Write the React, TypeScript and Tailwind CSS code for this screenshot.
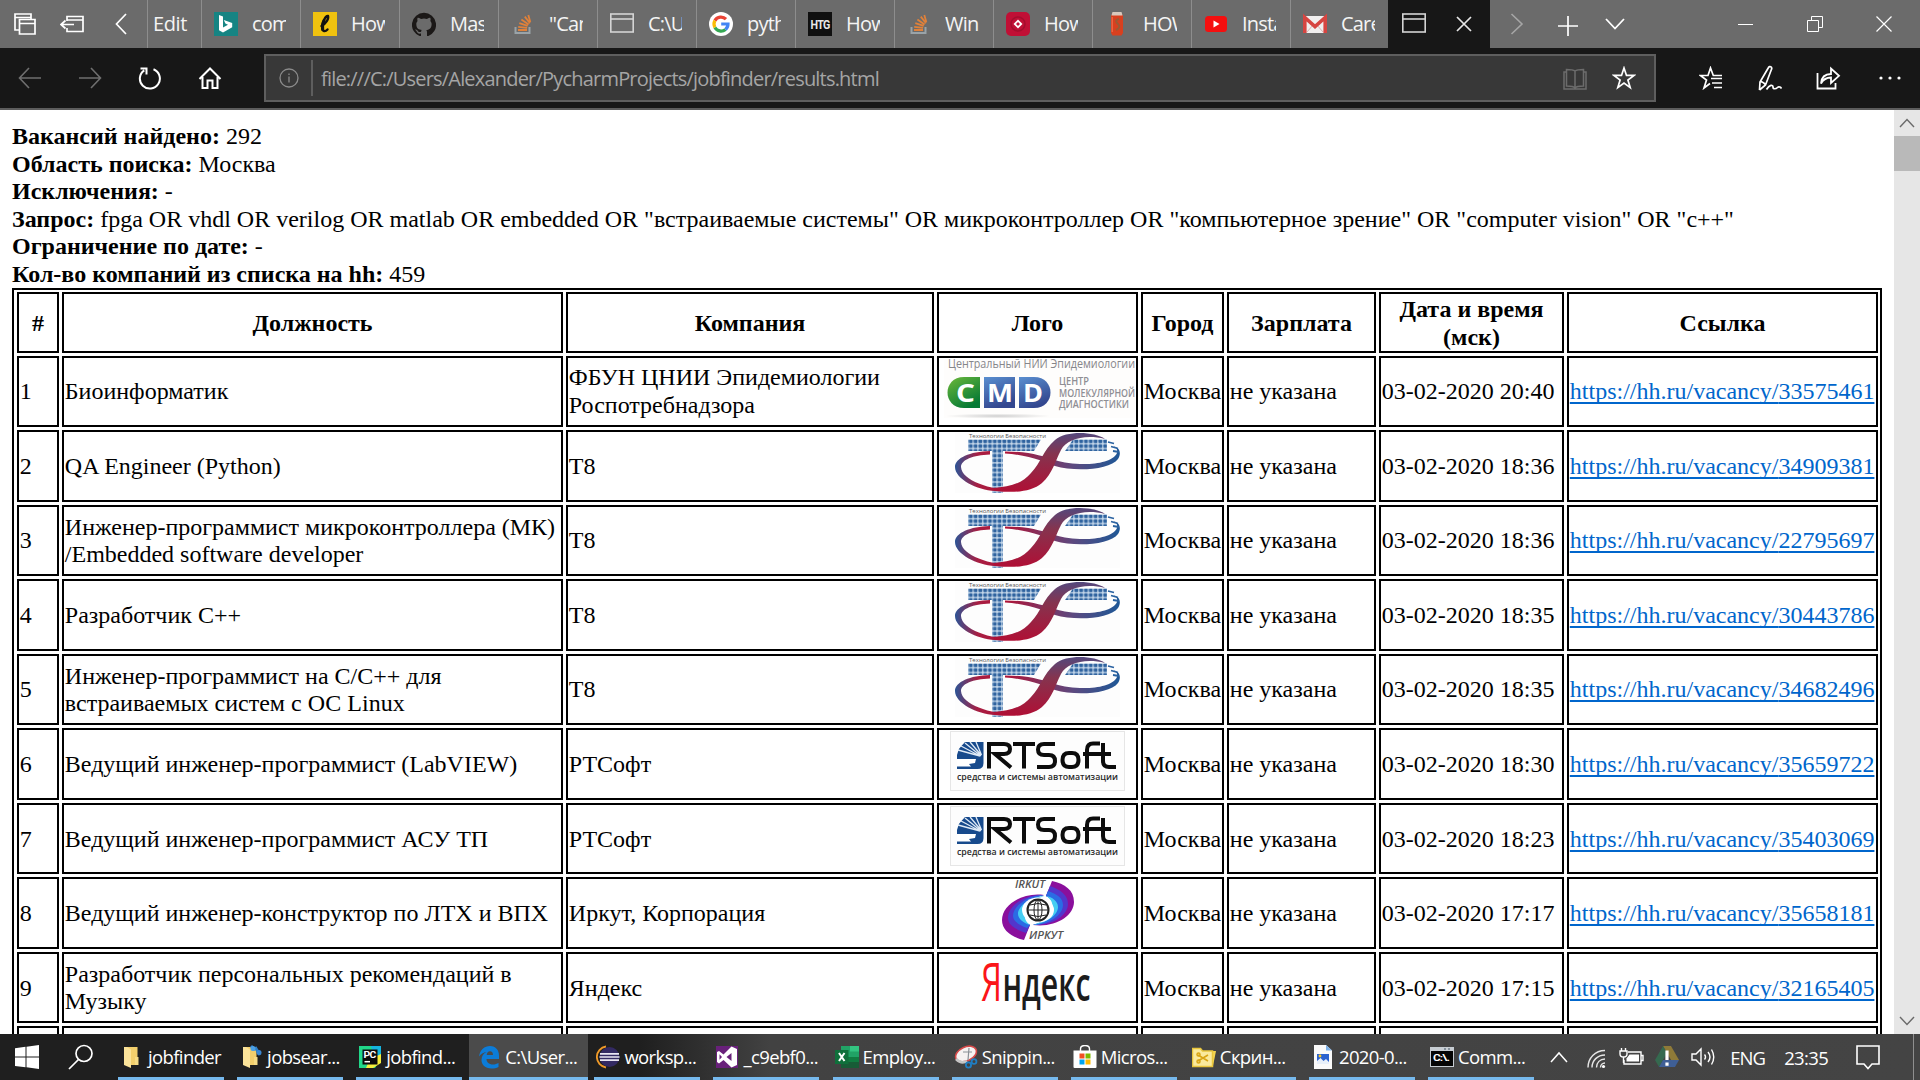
import React from 'react';

type IconProps = { children: React.ReactNode; w?: number; h?: number; stroke?: string; sw?: number; className?: string };

function Svg({ children, w = 24, h = 24, stroke = 'none', sw = 1.5, className = '' }: IconProps) {
  return (
    <svg width={w} height={h} viewBox={`0 0 ${w} ${h}`} fill="none" stroke={stroke} strokeWidth={sw} className={`shrink-0 ${className}`}>
      {children}
    </svg>
  );
}

/* ---------- Favicons ---------- */

const PageIcon = () => (
  <Svg stroke="#d4d4d4" sw={1.6}>
    <rect x="0.8" y="2" width="22.4" height="18" />
    <path d="M1 7h22" />
  </Svg>
);

const BingIcon = () => (
  <Svg>
    <rect width="24" height="24" fill="#168483" />
    <path d="M5 3l4 1.6v11l5-2.8-2.6-1.3L9.800 8l8.400 3v4.300L9 20.500l-4-2.300z" fill="#fff" />
  </Svg>
);

const LetterLIcon = () => (
  <Svg>
    <rect width="24" height="24" fill="#f0c20f" />
    <path d="M8.500 14c4-2 7.500-7 6.500-10-2.500-.5-5.500 6-5.800 11-.2 4 2.500 5.500 5.300 2.500" stroke="#111" strokeWidth="2.400" strokeLinecap="round" />
    <path d="M11 8.500c-1.500 3-2 6-1.300 9" stroke="#111" strokeWidth="3" strokeLinecap="round" />
  </Svg>
);

const GithubIcon = () => (
  <Svg>
    <path
      transform="translate(0 .5)"
      fill="#1b1817"
      d="M12 .3a12 12 0 0 0-3.800 23.400c.6.100.8-.3.800-.6v-2c-3.300.7-4-1.600-4-1.600-.6-1.400-1.400-1.800-1.400-1.800-1-.7.1-.7.1-.7 1.200 0 1.900 1.200 1.900 1.200 1 1.800 2.800 1.300 3.500 1 0-.8.4-1.300.7-1.600-2.700-.3-5.500-1.300-5.500-6 0-1.200.5-2.300 1.300-3.100-.2-.4-.6-1.600 0-3.200 0 0 1-.3 3.400 1.200a11.500 11.500 0 0 1 6 0c2.300-1.500 3.300-1.200 3.300-1.200.6 1.600.2 2.800 0 3.200.9.800 1.300 1.900 1.300 3.200 0 4.600-2.800 5.600-5.500 5.900.5.4.9 1 .9 2.200v3.300c0 .3.1.7.8.6A12 12 0 0 0 12 .3"
    />
  </Svg>
);

const StackIcon = () => (
  <Svg>
    <path d="M4.500 15v6h14v-6" stroke="#9aa3a8" strokeWidth="2" />
    <path d="M7 18h9M7.200 14.800l8.900 1M8.300 11.200l8.400 2.700M10.400 7.600l7.200 4.800M13.800 4.600l5.200 6.600M17.300 3l2 7" stroke="#e0813a" strokeWidth="1.800" />
  </Svg>
);

const GoogleIcon = () => (
  <Svg>
    <circle cx="12" cy="12" r="12" fill="#fff" />
    <g strokeWidth="3.200">
      <path d="M17 7.200A7 7 0 0 0 5.900 8.600" stroke="#ea4335" />
      <path d="M5.900 8.600a7 7 0 0 0 0 6.800" stroke="#fbbc05" />
      <path d="M5.900 15.400a7 7 0 0 0 10.600 2" stroke="#34a853" />
      <path d="M16.500 17.400A7 7 0 0 0 19 12h-6.800" stroke="#4285f4" />
    </g>
  </Svg>
);

const HtgIcon = () => (
  <Svg>
    <rect width="24" height="24" fill="#101010" />
    <text x="2.500" y="16.500" fontSize="12" fontWeight="700" fill="#e8e8e8" textLength="19" lengthAdjust="spacingAndGlyphs" fontFamily="Roboto, sans-serif">HTG</text>
  </Svg>
);

const RedIcon = () => (
  <Svg>
    <rect width="24" height="24" rx="5" fill="#c00f35" />
    <circle cx="12" cy="12" r="7" stroke="#a30d2d" strokeWidth="1.500" />
    <path d="M12 7.500l4.500 4.500-4.500 4.500L7.500 12z" fill="#fff" />
    <path d="M12 10l2 2-2 2-2-2z" fill="#c00f35" />
  </Svg>
);

const CanIcon = () => (
  <Svg>
    <path d="M7.500 1h9l1.500 3v17l-1.500 2.500h-9L6 21V4z" fill="#d8401f" />
    <path d="M7.500 0h9l1 3.500H6.500z" fill="#d9c9bd" />
    <path d="M14 7c-4 1-3 3-1 5s2 4-2 6" stroke="#9a5a34" strokeWidth="2" />
    <path d="M7.200 5v15" stroke="#f06c4a" strokeWidth="1.200" />
  </Svg>
);

const YoutubeIcon = () => (
  <Svg>
    <rect x="1" y="4" width="22" height="16" rx="3.500" fill="#f50f0f" />
    <path d="M9.500 8.500v7l6-3.500z" fill="#fff" />
  </Svg>
);

const GmailIcon = () => (
  <Svg>
    <rect y="4" width="24" height="17" rx="1" fill="#f1efef" />
    <path d="M4 20l6-7m10 7l-6-7" stroke="#d9b3b0" strokeWidth="1" />
    <path d="M1.800 21V5.500L12 14.500 22.200 5.500V21" stroke="#d64541" strokeWidth="3.600" />
  </Svg>
);

const tabs: { icon: React.ReactNode; label: string }[] = [
  { icon: <BingIcon />, label: 'comp' },
  { icon: <LetterLIcon />, label: 'How t' },
  { icon: <GithubIcon />, label: 'Mast' },
  { icon: <StackIcon />, label: '"Can' },
  { icon: <PageIcon />, label: 'C:\\Us' },
  { icon: <GoogleIcon />, label: 'pyth' },
  { icon: <HtgIcon />, label: 'How' },
  { icon: <StackIcon />, label: 'Win' },
  { icon: <RedIcon />, label: 'How' },
  { icon: <CanIcon />, label: 'HOW' },
  { icon: <YoutubeIcon />, label: 'Insta' },
  { icon: <GmailIcon />, label: 'Care' },
];

function TabBar() {
  return (
    <div className="flex h-12 bg-[#6b6b6b] text-[20px] tracking-[-0.8px] text-[#f4f4f4]">
      <div className="flex w-[147px] shrink-0 items-center pl-[14px]">
        <Svg w={22} h={24} stroke="#fff" sw={1.700}>
          <path d="M5 18H1V2h16v5M1 5.500h16" />
          <path d="M5.500 7.500h15.500v14.500H5.500zM5.500 11.500H21" />
        </Svg>
        <Svg w={24} h={24} stroke="#fff" sw={1.700} className="ml-6">
          <path d="M7 9V4.500h16v15H7V16M7 8h16M1 12.500h13M5.500 8.500l-4.500 4 4.500 4" />
        </Svg>
        <Svg w={12} h={22} stroke="#fff" sw={1.700} className="ml-[31px]">
          <path d="M11 1L1.500 11 11 21" />
        </Svg>
      </div>
      <div className="flex w-[54px] shrink-0 items-center border-l border-[#8d8d8d] pl-[5px] tracking-[-0.4px]">Edit</div>
      {tabs.map((t, i) => (
        <div key={i} className="flex w-[99px] shrink-0 items-center border-l border-[#8d8d8d] pl-3">
          {t.icon}
          <span className="ml-[14px] w-[34px] overflow-hidden whitespace-nowrap">{t.label}</span>
        </div>
      ))}
      <div className="-ml-px flex w-[102px] shrink-0 items-center bg-[#171717] pl-[14px]">
        <PageIcon />
        <Svg w={16} h={16} stroke="#e6e6e6" sw={1.700} className="ml-[30px]">
          <path d="M1 1l14 14M15 1L1 15" />
        </Svg>
      </div>
      <div className="flex flex-1 items-center pl-[20px]">
        <Svg w={14} h={22} stroke="#a6a6a6" sw={1.600}>
          <path d="M1.500 1L12 11 1.500 21" />
        </Svg>
        <Svg w={22} h={22} stroke="#fff" sw={1.700} className="ml-[33px] mt-[3px]">
          <path d="M11 1v20M1 11h20" />
        </Svg>
        <Svg w={20} h={12} stroke="#fff" sw={1.800} className="ml-[26px]">
          <path d="M1 1l9 9.500L19 1" />
        </Svg>
        <Svg w={15} h={15} stroke="#fff" sw={1} className="ml-auto">
          <path d="M0 7.500h15" />
        </Svg>
        <Svg w={16} h={16} stroke="#fff" sw={1} className="ml-[54px]">
          <path d="M.5 4.500h11v11H.5zM4.500 4.500v-4h11v11h-4" />
        </Svg>
        <Svg w={16} h={16} stroke="#fff" sw={1.200} className="ml-[53px] mr-[28px]">
          <path d="M.5 .5l15 15M15.500 .5l-15 15" />
        </Svg>
      </div>
    </div>
  );
}

function Toolbar() {
  return (
    <div className="flex h-[62px] items-center border-b-2 border-[#5d5d5d] bg-[#171717] pl-[18px] text-[20px]">
      <Svg w={24} h={22} stroke="#6f6f6f" sw={1.600}>
        <path d="M23 11H1.500M11 1L1.500 11 11 21" />
      </Svg>
      <Svg w={24} h={22} stroke="#6f6f6f" sw={1.600} className="ml-9">
        <path d="M1 11h21.500M13 1l9.500 10L13 21" />
      </Svg>
      <Svg w={24} h={24} stroke="#fff" sw={2} className="ml-9">
        <path d="M15.500 3.300A10 10 0 1 1 6.300 4.300M2.500 2.500h6v6" />
      </Svg>
      <Svg w={24} h={24} stroke="#fff" sw={2} className="ml-9">
        <path d="M1.500 13L12 2.500 22.500 13M4.500 11v11h5v-7.500h5V22h5V11" />
      </Svg>
      <div className="ml-[42px] flex h-12 w-[1392px] items-center border-2 border-[#5e5e5e] bg-[#383838] text-[#a5a5a5]">
        <Svg w={20} h={20} stroke="#8b8b8b" sw={1.300} className="ml-[13px]">
          <circle cx="10" cy="10" r="9" />
          <path d="M10 8.500v6M10 5.500v1.600" />
        </Svg>
        <div className="ml-3 h-9 w-0.5 bg-[#5e5e5e]" />
        <span className="ml-2 mt-[2px] whitespace-nowrap tracking-[-0.8px]">file:///C:/Users/Alexander/PycharmProjects/jobfinder/results.html</span>
        <Svg w={24} h={22} stroke="#6c6c6c" sw={1.500} className="ml-auto mt-[2px]">
          <path d="M12 3v17M12 3C10 1.500 6 1.500 3.500 1.500V18c3 0 7 0 8.500 2 1.500-2 5.500-2 8.500-2V1.500C18 1.500 14 1.500 12 3zM3 4H1v17h22V4h-2" />
        </Svg>
        <Svg w={24} h={24} stroke="#fff" sw={1.700} className="ml-[25px] mr-[18px]">
          <path d="M12 2l2.500 7.400H22l-6.100 4.600 2.300 7.600-6.200-4.600-6.200 4.600 2.300-7.600L2 9.400h7.500z" />
        </Svg>
      </div>
      <Svg w={24} h={24} stroke="#fff" sw={1.700} className="ml-[43px]">
        <path d="M12 12.500h11M13 17h10M15 21.500h8M23 9.500h-8.700L11.500 2 9 9.500H1.500l6 4.600L5 22l6-4.500" />
      </Svg>
      <Svg w={24} h={26} stroke="#fff" sw={1.700} className="ml-[35px]">
        <path d="M1.500 25l.5-8L10.500 2.500c1-2 4-.5 3 1.800L7.500 20l-6 5M2.200 17c.5-1 4 .5 5.300 3M8.500 24.500c3-5 6.500-5 6.500-2.500s3 2 4.500.5 3.500 0 4 1" />
      </Svg>
      <Svg w={25} h={24} stroke="#fff" sw={1.800} className="ml-[34px]">
        <path d="M1.500 7v15.500h18V17M5 17.500c.5-6.500 4-9.500 10-9.500V2.500l8 7.300-8 7.200v-5.500c-4 0-7.500 1.500-10 6z" />
      </Svg>
      <Svg w={24} h={6} className="ml-[37px]">
        <g fill="#fff">
          <circle cx="3" cy="3" r="1.600" />
          <circle cx="12" cy="3" r="1.600" />
          <circle cx="21" cy="3" r="1.600" />
        </g>
      </Svg>
    </div>
  );
}

/* ---------- Company logos ---------- */

const SANS = 'Open Sans, Noto Sans, sans-serif';

const CmdLogo = () => (
  <svg width="195" height="66" viewBox="0 0 195 66" className="shrink-0">
    <defs>
      <linearGradient id="cg" x1="0" y1="0" x2="0.600" y2="1">
        <stop offset="0" stopColor="#6cb83a" />
        <stop offset="1" stopColor="#067a35" />
      </linearGradient>
      <linearGradient id="cb" x1="0" y1="0" x2="0.400" y2="1">
        <stop offset="0" stopColor="#5a8fd0" />
        <stop offset="1" stopColor="#33478f" />
      </linearGradient>
      <radialGradient id="cs">
        <stop offset="0" stopColor="#cfcfcf" />
        <stop offset="1" stopColor="#fdfcfb" />
      </radialGradient>
    </defs>
    <rect x="4" y="0" width="191" height="59" fill="#fefdfc" />
    <text x="8" y="9" fontSize="12" fontWeight="500" fill="#86868a" fontFamily={SANS} textLength="187" lengthAdjust="spacingAndGlyphs">Центральный НИИ Эпидемиологии</text>
    <path d="M40 18v31H24c-22 0-22-31 0-31z" fill="url(#cg)" />
    <rect x="44" y="18" width="31" height="31" fill="url(#cb)" />
    <path d="M79 18h15c22 0 22 31 0 31H79z" fill="url(#cb)" />
    <ellipse cx="58" cy="57" rx="52" ry="2.500" fill="url(#cs)" />
    <g fontFamily={SANS} fontSize="24.500" fontWeight="700" fill="#fff">
      <text x="16" y="42.500" textLength="19" lengthAdjust="spacingAndGlyphs">C</text>
      <text x="47" y="42.500" textLength="26" lengthAdjust="spacingAndGlyphs">M</text>
      <text x="83" y="42.500" textLength="20" lengthAdjust="spacingAndGlyphs">D</text>
    </g>
    <g fontFamily={SANS} fontSize="10" fontWeight="600" fill="#8e8e94">
      <text x="119" y="26" textLength="30" lengthAdjust="spacingAndGlyphs">ЦЕНТР</text>
      <text x="119" y="37.500" textLength="76" lengthAdjust="spacingAndGlyphs">МОЛЕКУЛЯРНОЙ</text>
      <text x="119" y="49" textLength="70" lengthAdjust="spacingAndGlyphs">ДИАГНОСТИКИ</text>
    </g>
  </svg>
);

const T8Logo = () => (
  <svg width="165" height="60" viewBox="0 0 165 60" className="shrink-0">
    <defs>
      <pattern id="td" width="4.800" height="4.800" patternUnits="userSpaceOnUse" x="13.500" y="6">
        <rect width="4.800" height="4.800" fill="#c3d6e9" />
        <rect x="0.400" y="0.400" width="3.700" height="3.700" rx="1" fill="#2f639f" />
      </pattern>
      <linearGradient id="tr" x1="0" y1="0" x2="0" y2="1">
        <stop offset="0" stopColor="#54487c" />
        <stop offset="0.350" stopColor="#85344f" />
        <stop offset="1" stopColor="#b00f35" />
      </linearGradient>
      <linearGradient id="tl" x1="0" y1="0" x2="1" y2="0">
        <stop offset="0" stopColor="#2d5596" />
        <stop offset="0.350" stopColor="#a81e42" />
        <stop offset="1" stopColor="#b00f35" />
      </linearGradient>
      <linearGradient id="tq" x1="0" y1="0" x2="1" y2="0">
        <stop offset="0" stopColor="#b01437" />
        <stop offset="0.600" stopColor="#5b4a80" />
        <stop offset="1" stopColor="#1d5796" />
      </linearGradient>
    </defs>
    <rect width="165" height="60" fill="#fdfdfd" />
    <text x="14" y="4.500" fontSize="5.500" fill="#555" fontFamily={SANS} textLength="77" lengthAdjust="spacingAndGlyphs">Технологии Безопасности</text>
    <path d="M13 6.500h73l-7 11.500H48v42H37V18H13z" fill="url(#td)" />
    <path d="M118 6.500h34v11.500h-42z" fill="url(#td)" />
    <path d="M35 18C15 18.500 0 25 0 34c0 12 22 23 40 24h25c-30-1-58-10-59-24C6 27 18 22 35 21.500z" fill="url(#tl)" />
    <path d="M50 18.500c25 0 38 5 50 8.500 20 6.500 56 6 62-7 1-5-2-6-4-7 8 2 8 8 5 13-8 11-43 13-63 7-10-3.500-25-11-50-12.500z" fill="url(#tq)" />
    <path d="M150 6C140-1 112-3 100 7 88 17 86 30 76 40 68 50 55 54 38 55l2 3c20 2 36 1 47-8 11-10 13-22 19-33C112 6 130 1 150 6z" fill="url(#tr)" />
    <path d="M153 9l6 1.500m-3 3l7 2m-5 2.500l6 1" stroke="#2a62a0" strokeWidth="1.800" />
  </svg>
);

const RtLogo = () => (
  <svg width="175" height="60" viewBox="0 0 175 60" className="shrink-0">
    <rect x="0.500" y="0.500" width="174" height="59" fill="#fdfdfd" stroke="#e6e6e6" />
    <path d="M11 11h22.500v21q0 6-6 6H7V24z" fill="#174a8c" />
    <path d="M7 11h8L7 20z" fill="#fdfdfd" />
    <path d="M8 19l22 6M11 15l19 10M15 12l16 13M20 11l11 13M26 11l5.500 13" stroke="#dfeaf6" strokeWidth="1.300" />
    <path d="M7 28h19l-1 4-6 1 2 2.500H7z" fill="#fff" />
    <g stroke="#0c0c0c" strokeWidth="4" fill="none">
      <path d="M39 37.500V13h15q6 0 6 5t-6 5h-9l16 13.500" />
      <path d="M63 13h22M74 13v24.500" />
      <path d="M105 13H94q-6 0-6 5.500t6 5.500h5q6 0 6 6t-6 6H87" />
      <path d="M119 22h3q6.500 0 6.500 7t-6.500 7h-3q-6.500 0-6.500-7t6.500-7z" />
      <path d="M137 37.500V19q0-6.500 6-6.500h7M133 23h28M153 12v18q0 6 6 6h7" />
    </g>
    <text x="7" y="48.500" fontSize="9.500" fontWeight="600" fill="#2a2a2a" fontFamily={SANS} textLength="161" lengthAdjust="spacingAndGlyphs">средства и системы автоматизации</text>
  </svg>
);

const IrkutLogo = () => (
  <svg width="72" height="60" viewBox="0 0 72 60" className="shrink-0">
    <path d="M42 15C20 12 0 25 0 40c0 10 9 17 22 20l6-15C16 39 18 21 42 15z" fill="#8a0f9c" />
    <path d="M42 15C22 14 6 26 6 38c0 7 7 11 18 15l4-8C16 39 18 21 42 15z" fill="#5236cc" />
    <path d="M42 15C26 15 11 26 11 36c0 5 6 9 14 12l3-3C16 39 18 21 42 15z" fill="#2b6be4" />
    <path d="M42 16C28 17 16 26 16 34c0 5 6 9 12 11C18 38 22 23 42 16z" fill="#45cdf2" />
    <path d="M31 45c22 3 41-9 41-23C72 10 63 4 50 1l-6 15c13 5 11 23-13 29z" fill="#8a0f9c" />
    <path d="M31 45c20 1 35-10 35-21 0-9-7-14-18-18l-4 10c13 5 11 23-13 29z" fill="#5236cc" />
    <path d="M31 45c16 0 30-10 30-20 0-7-6-11-15-14l-2 5c13 5 11 23-13 29z" fill="#2b6be4" />
    <path d="M31 45c14-2 25-10 25-18 0-6-6-10-12-11 11 6 9 22-13 29z" fill="#45cdf2" />
    <ellipse cx="36" cy="30" rx="16" ry="12.500" fill="#fff" />
    <g stroke="#222" strokeWidth="1" fill="none">
      <circle cx="36" cy="30" r="10.500" strokeWidth="2" fill="#fff" />
      <ellipse cx="36" cy="30" rx="4" ry="10" />
      <path d="M26 30h20M28 25q8-3 16 0M28 35q8 3 16 0M36 20v20" />
    </g>
    <g fontFamily={SANS} fontSize="10" fontStyle="italic" fontWeight="600" fill="#555">
      <text x="13" y="8" textLength="30" lengthAdjust="spacingAndGlyphs">IRKUT</text>
      <text x="27" y="59" textLength="34" lengthAdjust="spacingAndGlyphs">ИРКУТ</text>
    </g>
  </svg>
);

const YandexLogo = () => (
  <svg width="120" height="60" viewBox="0 0 120 60" className="shrink-0">
    <g fontFamily={SANS}>
      <text x="3" y="45.500" fontSize="53" fontWeight="500" fill="#fb1519" textLength="21" lengthAdjust="spacingAndGlyphs">Я</text>
      <text x="24.500" y="45.500" fontSize="47" fontWeight="600" fill="#1c1c1c" textLength="88" lengthAdjust="spacingAndGlyphs">ндекс</text>
    </g>
  </svg>
);

/* ---------- Results table ---------- */

type Row = { title: string[]; company: string[]; logo: React.ReactNode; time: string; id: string };

const rows: Row[] = [
  { title: ['Биоинформатик'], company: ['ФБУН ЦНИИ Эпидемиологии', 'Роспотребнадзора'], logo: <CmdLogo />, time: '20:40', id: '33575461' },
  { title: ['QA Engineer (Python)'], company: ['Т8'], logo: <T8Logo />, time: '18:36', id: '34909381' },
  { title: ['Инженер-программист микроконтроллера (МК)', '/Embedded software developer'], company: ['Т8'], logo: <T8Logo />, time: '18:36', id: '22795697' },
  { title: ['Разработчик С++'], company: ['Т8'], logo: <T8Logo />, time: '18:35', id: '30443786' },
  { title: ['Инженер-программист на С/С++ для', 'встраиваемых систем с ОС Linux'], company: ['Т8'], logo: <T8Logo />, time: '18:35', id: '34682496' },
  { title: ['Ведущий инженер-программист (LabVIEW)'], company: ['РТСофт'], logo: <RtLogo />, time: '18:30', id: '35659722' },
  { title: ['Ведущий инженер-программист АСУ ТП'], company: ['РТСофт'], logo: <RtLogo />, time: '18:23', id: '35403069' },
  { title: ['Ведущий инженер-конструктор по ЛТХ и ВПХ'], company: ['Иркут, Корпорация'], logo: <IrkutLogo />, time: '17:17', id: '35658181' },
  { title: ['Разработчик персональных рекомендаций в', 'Музыку'], company: ['Яндекс'], logo: <YandexLogo />, time: '17:15', id: '32165405' },
];

const headers = ['#', 'Должность', 'Компания', 'Лого', 'Город', 'Зарплата', 'Дата и время (мск)', 'Ссылка'];

const summary: [string, string][] = [
  ['Вакансий найдено:', '292'],
  ['Область поиска:', 'Москва'],
  ['Исключения:', '-'],
  ['Запрос:', 'fpga OR vhdl OR verilog OR matlab OR embedded OR "встраиваемые системы" OR микроконтроллер OR "компьютерное зрение" OR "computer vision" OR "c++"'],
  ['Ограничение по дате:', '-'],
  ['Кол-во компаний из списка на hh:', '459'],
];

const Cell = ({ children }: { children?: React.ReactNode }) => (
  <div className="flex items-center whitespace-nowrap border-2 border-black pl-[0.8px] pt-[1.5px]">
    <div>{children}</div>
  </div>
);

const lines = (a: string[]) => a.map((s) => <div key={s}>{s}</div>);

function Page() {
  return (
    <div className="flex h-[924px] overflow-hidden bg-white font-['Liberation_Serif',serif] text-[24px] leading-[27.6px] text-black">
      <div className="w-[1894px] shrink-0 pl-3 pt-[13px]">
        <div className="-mb-px">
          {summary.map(([k, v]) => (
            <div key={k} className="whitespace-nowrap">
              <b>{k}</b> {v}
            </div>
          ))}
        </div>
        <div className="grid w-[1870px] auto-rows-[71.55px] grid-cols-[42px_501px_368px_201px_83px_149px_185px_311px] grid-rows-[61px] gap-[3px] border-2 border-black pl-[3px] pt-[2px]">
          {headers.map((h) => (
            <div key={h} className="flex items-center justify-center border-2 border-black px-3 pt-[3px] text-center font-bold">
              {h}
            </div>
          ))}
          {rows.map((r, i) => (
            <React.Fragment key={r.id}>
              <Cell>{i + 1}</Cell>
              <Cell>{lines(r.title)}</Cell>
              <Cell>{lines(r.company)}</Cell>
              <div className="flex items-start justify-center border-2 border-black pt-[1px]">{r.logo}</div>
              <Cell>Москва</Cell>
              <Cell>не указана</Cell>
              <Cell>03-02-2020 {r.time}</Cell>
              <Cell>
                <a className="text-[#0066cc] underline decoration-2 underline-offset-[3px] [text-decoration-skip-ink:none]">https://hh.ru/vacancy/{r.id}</a>
              </Cell>
            </React.Fragment>
          ))}
          {headers.map((h) => (
            <div key={h} className="border-2 border-black" />
          ))}
        </div>
      </div>
      <div className="flex flex-1 flex-col items-center bg-[#e6e6e6]">
        <div className="flex h-[26px] items-center">
          <Svg w={16} h={10} stroke="#6a6a6a" sw={1.400}>
            <path d="M1 9l7-7.500L15 9" />
          </Svg>
        </div>
        <div className="h-[35px] w-full bg-[#b9b9b9]" />
        <div className="mt-auto flex h-[26px] items-center">
          <Svg w={16} h={10} stroke="#6a6a6a" sw={1.400}>
            <path d="M1 1l7 7.500L15 1" />
          </Svg>
        </div>
      </div>
    </div>
  );
}

/* ---------- Taskbar ---------- */

const Folder = ({ children }: { children?: React.ReactNode }) => (
  <Svg>
    <path d="M5 2h12.500v18H9z" fill="#f3cf6c" />
    <path d="M4 2h3l4 2.500V23L4 20z" fill="#fbe39a" />
    <path d="M15 12h3.500v8H15z" fill="#f7dc85" />
    {children}
  </Svg>
);

const tasks: { icon: React.ReactNode; label: string; active?: boolean }[] = [
  { icon: <Folder />, label: 'jobfinder' },
  {
    icon: (
      <Folder>
        <path d="M12 1l4 4m0-3l5 8" stroke="#2f7fc8" strokeWidth="3" />
        <circle cx="14" cy="3.500" r="2.500" fill="#4ba0e4" />
        <circle cx="20" cy="7.500" r="2.500" fill="#3b87d3" />
      </Folder>
    ),
    label: 'jobsear...',
  },
  {
    icon: (
      <Svg>
        <path d="M1 1h22v12L17 23H1z" fill="#21d789" />
        <path d="M13 1h10v12l-6 4z" fill="#15b5e0" />
        <path d="M12 14l11-5v9l-8 5H8z" fill="#f5ee3c" />
        <rect x="4.500" y="4.500" width="15" height="15" fill="#0b0b0b" />
        <text x="5.500" y="12.800" fontSize="9" fontWeight="700" fill="#fff" textLength="12" lengthAdjust="spacingAndGlyphs" fontFamily="Roboto, sans-serif">PC</text>
        <path d="M6.500 16.700h5.500" stroke="#fff" />
      </Svg>
    ),
    label: 'jobfind...',
  },
  {
    icon: (
      <Svg>
        <path d="M2 11.500C3 5 7.500 1 13 1c6 0 9 4.500 9 9.500V14H9.500c0 4 3.500 5.500 6.500 5.500 2 0 4-.6 5.500-1.500v4c-2 1-4.500 1.500-7 1.500C8 23.500 4.500 19.500 4.500 15c0-4 2-6.500 5-8C6.500 7.500 3.800 9 2 11.500zM9.700 10H16c0-2.500-1-3.800-3-3.800S10 7.500 9.700 10z" fill="#0c7cd8" />
      </Svg>
    ),
    label: 'C:\\User...',
    active: true,
  },
  {
    icon: (
      <Svg>
        <path d="M10 1.500a10.600 10.600 0 0 0 0 21" stroke="#f09a28" strokeWidth="1.800" />
        <circle cx="13.500" cy="12" r="10" fill="#332a63" />
        <path d="M4 8.800h19M3.500 12h20M4 15.200h19" stroke="#e9e6f3" strokeWidth="1.700" />
      </Svg>
    ),
    label: 'worksp...',
  },
  {
    icon: (
      <Svg>
        <path d="M1 1h22v22H1z" fill="#68217a" />
        <path d="M16.500 1.500L22 4v16l-5.500 2.500L8.500 15 4 18.500 2 17V7l2-1 4.500 3.500zM4.500 9.200v5.600L7 12zm12-1.200l-5 4 5 4z" fill="#fff" fillRule="evenodd" />
      </Svg>
    ),
    label: '_c9ebf0...',
  },
  {
    icon: (
      <Svg>
        <path d="M6 1h18v22H6z" fill="#21a366" />
        <path d="M6 12h18v11H6z" fill="#107c41" />
        <path d="M15 1h9v5.500h-9z" fill="#33c481" />
        <path d="M6 17h18v6H6z" fill="#185c37" />
        <path d="M0 5h13.500v14H0z" fill="#0f703b" />
        <path d="M4 8l5.500 8M9.500 8L4 16" stroke="#fff" strokeWidth="2" />
      </Svg>
    ),
    label: 'Employ...',
  },
  {
    icon: (
      <Svg>
        <ellipse cx="12" cy="9" rx="11" ry="7" fill="#f5f2f2" stroke="#d64a4a" strokeWidth="1.600" transform="rotate(-25 12 9)" />
        <path d="M2 14c4 4 8 4 11 2" stroke="#c5c5c5" strokeWidth="2.500" />
        <path d="M9 7h9m-3-4l-1 12" stroke="#8a8f96" strokeWidth="1.200" />
        <circle cx="14.500" cy="20" r="2.600" stroke="#1f7fc4" strokeWidth="1.800" />
        <circle cx="20" cy="16.500" r="2.400" stroke="#1f7fc4" strokeWidth="1.800" />
      </Svg>
    ),
    label: 'Snippin...',
  },
  {
    icon: (
      <Svg>
        <path d="M7.500 6V4q0-3.500 4.500-3.500T16.500 4v2" stroke="#fff" strokeWidth="1.400" />
        <path d="M.5 5.500h23V22q0 1-1 1h-21q-1 0-1-1z" fill="#fff" />
        <path d="M6.500 8.500h5v5h-5z" fill="#f25022" />
        <path d="M12.500 8.500h5v5h-5z" fill="#7fba00" />
        <path d="M6.500 14.500h5v5h-5z" fill="#00a4ef" />
        <path d="M12.500 14.500h5v5h-5z" fill="#ffb900" />
      </Svg>
    ),
    label: 'Micros...',
  },
  {
    icon: (
      <Svg>
        <path d="M5 6h19l-3 15H5z" fill="#f4d54f" />
        <path d="M.5 3.500h8l2 2.500h10v15.500H.5z" fill="#faea9d" stroke="#e9c63c" />
        <path d="M6 10l10 6M6 16l10-6" stroke="#d9a514" strokeWidth="1.600" />
        <circle cx="6.500" cy="9.500" r="1.500" stroke="#d9a514" />
        <circle cx="6.500" cy="16.500" r="1.500" stroke="#d9a514" />
      </Svg>
    ),
    label: 'Скрин...',
  },
  {
    icon: (
      <Svg>
        <path d="M3 0h12l6 5.500V24H3z" fill="#fafafa" />
        <path d="M15 0v5.500h6z" fill="#7fb2e8" />
        <path d="M6 9h12v10H6z" fill="#2b62cf" />
        <path d="M6 19v-3l3.500-3 3 3 2.500-2 3 3v2z" fill="#e8f0fa" />
        <circle cx="9" cy="11" r="1.400" fill="#f5c92c" />
      </Svg>
    ),
    label: '2020-0...',
  },
  {
    icon: (
      <Svg>
        <rect x="0" y="2" width="24" height="20" fill="#c6ccd2" />
        <path d="M14 4h2M18 4h2" stroke="#6e7b88" />
        <rect x="1" y="6" width="22" height="15" fill="#050505" />
        <text x="3" y="16" fontSize="8.500" fontWeight="700" fill="#fff" textLength="16" lengthAdjust="spacingAndGlyphs" fontFamily="Roboto, sans-serif">C:\.</text>
      </Svg>
    ),
    label: 'Comm...',
  },
];

function Taskbar() {
  return (
    <div className="flex h-[46px] bg-[linear-gradient(90deg,#1f1f1f_0px,#1f1f1f_640px,#424242_770px,#444444_100%)] text-[18.500px] tracking-[-0.62px] text-white">
      <div className="flex w-[112px] shrink-0 items-center pl-[15px]">
        <Svg>
          <path d="M0 3.300l10.500-1.500V11.400H0zM11.500 1.700L24 0v11.400H11.500zM0 12.500h10.500v9.800L0 20.900zM11.500 12.500H24V24l-12.500-1.700z" fill="#fff" />
        </Svg>
        <Svg w={26} h={26} stroke="#fff" sw={1.700} className="ml-[29px]">
          <circle cx="16" cy="9.500" r="8" />
          <path d="M10.500 15.500L1 25" />
        </Svg>
      </div>
      {tasks.map((t) => (
        <div key={t.label} className={t.active ? 'flex w-[119.1px] shrink-0 flex-col bg-[#4b4b4b] pl-[6px]' : 'flex w-[119.1px] shrink-0 flex-col px-[6px]'}>
          <div className="flex h-[43px] items-center pl-[2px] pt-[2px]">
            {t.icon}
            <span className="ml-[4px] whitespace-nowrap">{t.label}</span>
          </div>
          <div className={t.active ? '-ml-[6px] h-[3px] bg-[#76b9ed]' : 'h-[3px] w-[106px] bg-[#76b9ed]'} />
        </div>
      ))}
      <div className="flex flex-1 items-center pl-[9px]">
        <Svg w={18} h={12} stroke="#fff" sw={1.500}>
          <path d="M1 11l8-9 8 9" />
        </Svg>
        <Svg w={19} h={20} stroke="#e6e6e6" sw={1.400} className="ml-[19px] mt-[3px]">
          <path d="M1 18.500C1 9 8 1.500 18 1.500M5 18.500C5 11.500 10.500 6 18 6M9.500 18.500c0-5 3.500-8.500 8.500-8.500M13.500 18.500c0-2.500 2-4.500 4.500-4.500" />
          <circle cx="16.500" cy="17.500" r="1.600" fill="#fff" stroke="none" />
        </Svg>
        <Svg w={25} h={20} stroke="#fff" sw={1.400} className="ml-[13px]">
          <path d="M9 5h13v12H5v-4M22 8.500h2v5h-2M1 4h7v3q0 3-3.500 3T1 7zM2.500 1v3M6.500 1v3M4.500 10v6" />
          <path d="M10.500 7.500h9.500v7H7.500v-3z" fill="#fff" stroke="none" />
        </Svg>
        <Svg w={24} h={24} className="ml-[11px]">
          <path d="M8 1h8l8 14h-8z" fill="#8f7a38" />
          <path d="M8 1l4 7-8 14-4-7z" fill="#35694f" />
          <path d="M8 15h16l-4 7H4z" fill="#3f5f96" />
          <path d="M12 5.500v9.500M12 17.500v3.300" stroke="#fff" strokeWidth="3.200" />
        </Svg>
        <Svg w={25} h={20} stroke="#fff" sw={1.400} className="ml-[12px]">
          <path d="M1 7h4l5-5v16l-5-5H1zM13.500 7.500q2 2.500 0 5M17 5q4 5 0 10M20.500 2.500q4.500 7.500 0 15" />
        </Svg>
        <span className="ml-[14px] mt-[2px] w-[54px] tracking-[-0.9px]">ENG</span>
        <span className="mt-[2px] w-[72px] tracking-[-0.6px]">23:35</span>
        <Svg w={24} h={26} stroke="#fff" sw={1.600}>
          <path d="M1 2h22v18h-7l-4 4.500L8 20H1z" />
        </Svg>
        <div className="ml-auto mr-[6px] h-full w-px bg-[#8f8f8f]" />
      </div>
    </div>
  );
}

export default function App() {
  return (
    <div className="flex h-[1080px] w-[1920px] flex-col overflow-hidden font-['Open_Sans','Noto_Sans',sans-serif]">
      <TabBar />
      <Toolbar />
      <Page />
      <Taskbar />
    </div>
  );
}
